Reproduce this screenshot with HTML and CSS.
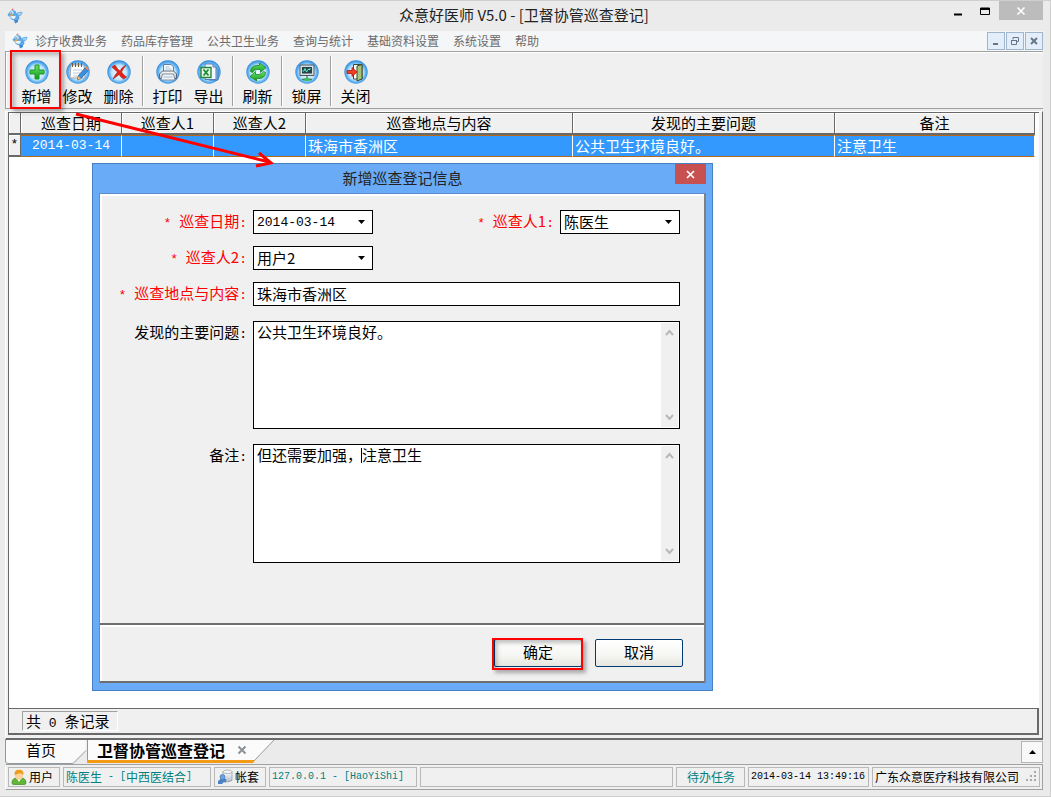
FILE: index.html
```html
<!DOCTYPE html>
<html lang="zh-CN">
<head>
<meta charset="utf-8">
<title>众意好医师 V5.0 - [卫督协管巡查登记]</title>
<meta name="viewport" content="width=device-width, initial-scale=1">
<link rel="stylesheet" href="styles.css">
</head>
<body>
<svg class="defs" aria-hidden="true">
  <defs>
    <radialGradient id="ball" cx="50%" cy="52%" r="52%">
      <stop offset="0" stop-color="#eefaff"/><stop offset=".6" stop-color="#c3e6fc"/><stop offset=".8" stop-color="#62b3f1"/><stop offset="1" stop-color="#2f86da"/>
    </radialGradient>
    <linearGradient id="green" x1="0" y1="0" x2="0" y2="1"><stop offset="0" stop-color="#6fe06a"/><stop offset="1" stop-color="#0f9a1c"/></linearGradient>
    <linearGradient id="metal" x1="0" y1="0" x2="0" y2="1"><stop offset="0" stop-color="#ffffff"/><stop offset="1" stop-color="#b4bcc8"/></linearGradient>
    <symbol id="logo" viewBox="0 0 16 16">
      <path d="M2 5Q3 2.200 6 2.200T9.500 5.500Q12 3 15.500 4 15 7.500 12 8.500 13 10 12 11.500 10.500 13 8 12.500L5.500 12Q3 11 3 9 .8 8 .5 6.500z" fill="#5da7e6"/>
      <path d="M10.500 5.500Q13 4 15 4.500 14.500 7 11.500 7.500z" fill="#9fd0f5"/>
      <path d="M3 7.500Q6 8.500 8.500 7.500 9 10.500 6.500 11 3.500 10.500 3 7.500z" fill="#eef5fa"/>
      <circle cx="5" cy="4.800" r="1.700" fill="#d9edfb"/><circle cx="4.800" cy="5" r=".6" fill="#234"/>
      <path d="M1.500 7l5-.5-2 2z" fill="#f0a23a"/>
      <path d="M7 12l1 3.500L11 14v-2z" fill="#3f8bd2"/>
      <path d="M4 1.500l2-1 .5 1.500z" fill="#d8504a"/>
    </symbol>
  </defs>
</svg>

<div class="window">
  <header class="titlebar">
    <svg class="logo"><use href="#logo"/></svg>
    <h1>众意好医师 V5.0 - [卫督协管巡查登记]</h1>
    <div class="window-controls">
      <button aria-label="最小化"><svg width="10" height="14"><path d="M1 11.500h8" stroke="#000" stroke-width="2"/></svg></button>
      <button aria-label="最大化"><svg width="12" height="14"><path d="M1.500 5v6.500h9V5z" fill="none" stroke="#000"/><path d="M1 6h10" stroke="#000" stroke-width="2"/></svg></button>
      <button class="window-close" aria-label="关闭窗口"><svg width="10" height="10"><path d="M1.500 1.500l7 7m0-7l-7 7" stroke="#fff" stroke-width="1.600"/></svg></button>
    </div>
  </header>

  <nav class="menubar">
    <svg class="logo"><use href="#logo"/></svg>
    <button>诊疗收费业务</button>
    <button>药品库存管理</button>
    <button>公共卫生业务</button>
    <button>查询与统计</button>
    <button>基础资料设置</button>
    <button>系统设置</button>
    <button>帮助</button>
    <div class="mdi">
      <button aria-label="最小化子窗口"><svg width="10" height="10"><path d="M2 8h5" stroke="#667789" stroke-width="2"/></svg></button>
      <button aria-label="还原子窗口"><svg width="10" height="10"><path d="M3 3.500V1.500h5.500v4H7M1.500 4.500h5v4h-5z" fill="none" stroke="#667789"/><path d="M1 4.500h6" stroke="#667789"/></svg></button>
      <button aria-label="关闭子窗口"><svg width="10" height="10"><path d="M2 2l6 6m0-6l-6 6" stroke="#667789" stroke-width="2"/></svg></button>
    </div>
  </nav>

  <div class="toolbar" role="toolbar" aria-label="工具栏">
    <span class="sep"></span>
    <button class="tool marked">
      <svg viewBox="0 0 24 24"><circle cx="12" cy="12" r="11.700" fill="url(#ball)"/><path d="M10 5h4v5h5v4h-5v5h-4v-5H5v-4h5z" fill="url(#green)" stroke="#1b9a26"/></svg>新增</button>
    <button class="tool">
      <svg viewBox="0 0 24 24"><circle cx="12" cy="12" r="11.700" fill="url(#ball)"/><path d="M5 5h13l1 13H4z" fill="#fff" stroke="#9aa5b2"/><path d="M6.500 3v4M9.500 3v4M12.500 3v4M15.500 3v4" stroke="#7b5a2a"/><path d="M7 10h9M7 13h7M7 16h4" stroke="#b9c8da"/><path d="M19 8l3 2.500-7 8-3.500 1.500.5-4z" fill="#3f8fe0" stroke="#1f5ea8" stroke-width=".8"/><path d="M12 16l3 2.500-3.500 1.500z" fill="#f4b95f"/><path d="M19 8l3 2.500 1-1.500-2.500-2.500z" fill="#ee8b4a"/></svg>修改</button>
    <button class="tool">
      <svg viewBox="0 0 24 24"><circle cx="12" cy="12" r="11.700" fill="url(#ball)"/><path d="M5 7l3-2q2 4 5 6 2-4 6-6-3 4-4.500 7 2 3 5 5l-3 2q-3-2-4.500-4.500Q9 17 6 19q2-4 4.500-7Q8 10 5 7z" fill="#e02418" stroke="#b8160f" stroke-width=".6"/></svg>删除</button>
    <span class="sep"></span>
    <button class="tool">
      <svg viewBox="0 0 24 24"><circle cx="12" cy="12" r="11.700" fill="url(#ball)"/><path d="M7.500 12V4.500h7.500L17.500 7v5z" fill="#f7fbff" stroke="#5f7fa5"/><path d="M9.500 7h4M9.500 9h6" stroke="#a9c3de"/><path d="M6.500 11h11l3 3v4.500h-17V14z" fill="url(#metal)" stroke="#5b6674"/><path d="M6.500 14h11l1.500 6H5z" fill="#eef4fb" stroke="#6d7a89" stroke-width=".8"/><path d="M7.500 17h9" stroke="#a9b8c9"/></svg>打印</button>
    <button class="tool">
      <svg viewBox="0 0 24 24"><circle cx="12" cy="12" r="11.700" fill="url(#ball)"/><path d="M12 6.500h6l3 3V20h-9z" fill="#8cc0f5" stroke="#376fb4"/><path d="M8 4h8l3 3v12.500H8z" fill="#f5faff" stroke="#4f7fbc"/><path d="M16 4v3h3" fill="#a9cdf2" stroke="#4f7fbc"/><path d="M4 7.500h10v10H4z" fill="#e6f6e3" stroke="#25833a" stroke-width="1.400"/><path d="M6.500 9.500l5 6m0-6l-5 6" stroke="#1b8b34" stroke-width="1.800"/></svg>导出</button>
    <span class="sep"></span>
    <button class="tool">
      <svg viewBox="0 0 24 24"><circle cx="12" cy="12" r="11.700" fill="url(#ball)"/><path d="M4.500 11.500Q5 5.500 11 5.500h2.500V3L20 7.500l-5.500 5V9.500h-3q-4 0-5 3z" fill="url(#green)" stroke="#16882a" stroke-width=".8"/><path d="M19.500 12.500q-.5 6-6.500 6h-2.500V21L4 16.500l5.500-5v3h3q4 0 5-3z" fill="url(#green)" stroke="#16882a" stroke-width=".8"/></svg>刷新</button>
    <span class="sep"></span>
    <button class="tool">
      <svg viewBox="0 0 24 24"><circle cx="12" cy="12" r="11.700" fill="url(#ball)"/><path d="M5 5h14v10.500H5z" fill="#d6dde3" stroke="#4f5a63"/><path d="M7 7h10v6.500H7z" fill="#26414a"/><path d="M7.500 11H9l1-2.500 1.500 3.500 1.500-2.500h2V8" fill="none" stroke="#5ff0c8"/><path d="M12 16v3M7 19.500h10" stroke="#4b7a63" stroke-width="1.400"/><path d="M9.500 18h5v3h-5z" fill="#3cc25b"/></svg>锁屏</button>
    <span class="sep"></span>
    <button class="tool">
      <svg viewBox="0 0 24 24"><circle cx="12" cy="12" r="11.700" fill="url(#ball)"/><path d="M9.500 4.500h8.500v14.500H9.500z" fill="#fff" stroke="#3d4a3d"/><path d="M13 6l5-1.500V19l-5 2z" fill="#a9c37b" stroke="#3a4b2a"/><path d="M3 10.500h5V7.500l5 4.500-5 4.500v-3H3z" fill="#f0402a" stroke="#b31a0c" stroke-width=".8"/></svg>关闭</button>
  </div>

  <main class="panel">
    <div class="grid-area">
      <table class="records">
        <colgroup><col class="c-mark"><col class="c-date"><col class="c-person"><col class="c-person"><col class="c-place"><col class="c-issue"><col></colgroup>
        <thead>
          <tr><th></th><th>巡查日期</th><th>巡查人1</th><th>巡查人2</th><th>巡查地点与内容</th><th>发现的主要问题</th><th>备注</th></tr>
        </thead>
        <tbody>
          <tr><th class="latin" scope="row">*</th><td class="latin date">2014-03-14</td><td></td><td></td><td>珠海市香洲区</td><td>公共卫生环境良好。</td><td>注意卫生</td></tr>
        </tbody>
      </table>
    </div>
    <div class="summary"><span class="count">共<span class="latin"> 0 </span>条记录</span></div>
  </main>

  <div class="tabs">
    <button class="tab home"><svg viewBox="0 0 82 24" aria-hidden="true"><path d="M.5 0v21q0 2.500 2.500 2.500h65l13-13V0z" fill="#fafafa"/><path d="M.5 0v21q0 2.500 2.500 2.500h65l13-13" fill="none" stroke="#8f9aa0"/></svg><span>首页</span></button>
    <div class="tab active"><svg viewBox="0 0 187 24" aria-hidden="true"><path d="M.5 0v22h166L187 0z" fill="#fbfbfb"/><path d="M.5 0v21M187 0l-21 22" fill="none" stroke="#8f9aa0"/><path d="M0 20h168l-2 3H0z" fill="#f59a14"/></svg><span>卫督协管巡查登记</span><button class="tab-close" aria-label="关闭标签"><svg width="10" height="10"><path d="M1.500 1.500l7 7m0-7l-7 7" stroke="#8a9297" stroke-width="2"/></svg></button></div>
    <button class="scroll-up" aria-label="展开"><svg width="7" height="4"><path d="M0 4l3.500-4L7 4z"/></svg></button>
  </div>

  <footer class="statusbar">
    <span class="cell s-icon"><svg width="16" height="16"><path d="M1 14q0-5 5-5h4q5 0 5 5 0 1.500-2 1.500H3Q1 15.500 1 14z" fill="#63b53a" stroke="#3d8a20" stroke-width=".7"/><ellipse cx="8" cy="6.500" rx="4" ry="4.500" fill="#fbd29c"/><path d="M3.500 6Q3 .8 8 .8T12.500 6Q10 3.500 7.500 4.500T3.500 6z" fill="#ef9c1c"/><path d="M6.500 10.500L8 13l1.500-2.500" fill="#fff"/></svg>用户</span>
    <span class="cell s-text teal">陈医生<span class="latin"> - [</span>中西医结合<span class="latin">]</span></span>
    <span class="cell s-icon"><svg width="16" height="16"><path d="M6 2.500v9q4 3 9 0v-9z" fill="url(#metal)" stroke="#8a929b" stroke-width=".7"/><ellipse cx="10.500" cy="2.800" rx="4.500" ry="1.800" fill="#f3f5f7" stroke="#9aa1a8" stroke-width=".7"/><circle cx="5.500" cy="8" r="2.500" fill="#6fa3dc" stroke="#4478b8" stroke-width=".7"/><path d="M3.500 10L1 12v3h4l2-2 1.500 1 1-4z" fill="#4a82c8"/></svg>帐套</span>
    <span class="cell s-text teal latin">127.0.0.1 - [HaoYiShi]</span>
    <span class="cell s-fill"></span>
    <a class="cell s-task teal" href="#tasks">待办任务</a>
    <time class="cell s-time latin" datetime="2014-03-14T13:49:16">2014-03-14 13:49:16</time>
    <span class="cell s-company">广东众意医疗科技有限公司<svg width="12" height="12"><path d="M9 1h2M9 5h2M9 9h2M5 5h2M5 9h2M1 9h2" stroke="#aaa" stroke-width="2"/></svg></span>
  </footer>

  <section class="dialog" role="dialog" aria-labelledby="dialog-title">
    <header class="dialog-title">
      <h2 id="dialog-title">新增巡查登记信息</h2>
      <button aria-label="关闭对话框"><svg width="9" height="9"><path d="M1 1l7 7m0-7l-7 7" stroke="#fff" stroke-width="1.700"/></svg></button>
    </header>
    <form class="dialog-body">
      <div class="fields">
        <div class="field-rows">
          <div class="row">
            <label class="required" for="date"><span class="latin">* </span>巡查日期<span class="latin">:</span></label>
            <div class="combo"><input class="latin" id="date" type="text" value="2014-03-14"><svg width="7" height="4"><path d="M0 0h7L3.500 4z"/></svg></div>
            <label class="required second" for="person1"><span class="latin">* </span>巡查人1<span class="latin">:</span></label>
            <div class="combo"><select id="person1"><option>陈医生</option></select><svg width="7" height="4"><path d="M0 0h7L3.500 4z"/></svg></div>
          </div>
          <div class="row">
            <label class="required" for="person2"><span class="latin">* </span>巡查人2<span class="latin">:</span></label>
            <div class="combo"><select id="person2"><option>用户2</option></select><svg width="7" height="4"><path d="M0 0h7L3.500 4z"/></svg></div>
          </div>
          <div class="row">
            <label class="required" for="place"><span class="latin">* </span>巡查地点与内容<span class="latin">:</span></label>
            <input class="line" id="place" type="text" value="珠海市香洲区">
          </div>
        </div>
        <div class="row">
          <label for="issue">发现的主要问题<span class="latin">:</span></label>
          <div class="memo issue"><textarea id="issue">公共卫生环境良好。</textarea><div class="scroll"><svg width="9" height="7"><path d="M1 6l3.500-4L8 6" /></svg><svg width="9" height="7"><path d="M1 1l3.500 4L8 1"/></svg></div></div>
        </div>
        <div class="row">
          <label for="note">备注<span class="latin">:</span></label>
          <div class="memo note"><textarea id="note">但还需要加强，注意卫生</textarea><div class="scroll"><svg width="9" height="7"><path d="M1 6l3.500-4L8 6"/></svg><svg width="9" height="7"><path d="M1 1l3.500 4L8 1"/></svg></div><i class="caret"></i></div>
        </div>
      </div>
      <div class="actions">
        <button class="marked" type="button">确定</button>
        <button type="button">取消</button>
      </div>
    </form>
  </section>

  <svg class="pointer" width="210" height="64" aria-hidden="true"><path d="M5 5L198 53" stroke="#f00" stroke-width="3"/><path d="M188 44l12 10-15 3" fill="none" stroke="#f00" stroke-width="3"/></svg>
</div>
</body>
</html>
```

FILE: styles.css
```css
* { box-sizing: border-box; }
body {
  margin: 0;
  font: 15px/20px "Noto Sans CJK SC", sans-serif;
  color: #000;
  background: #ebebeb;
}
button, input, select, textarea { font: inherit; color: inherit; margin: 0; }
button { background: none; border: 0; padding: 0; }
h1, h2 { margin: 0; font-size: 15px; font-weight: 400; }
svg { display: block; flex: none; }
.defs { position: absolute; width: 0; height: 0; }
.latin { font-family: "Liberation Mono", "Noto Sans CJK SC", monospace; font-size: 13px; white-space: pre; }
.logo { width: 16px; height: 16px; }

.window {
  position: relative;
  display: flex;
  flex-direction: column;
  min-height: 100vh;
  padding: 0 7px 6px 5px;
  border: 1px solid #cfcfcf;
  border-left: 0;
}

.titlebar { display: grid; grid-template-columns: 1fr auto 1fr; height: 30px; }
.titlebar .logo { margin: 7px 2px; }
.titlebar h1 { line-height: 28px; color: #222; }
.window-controls { display: flex; justify-content: flex-end; align-items: flex-start; gap: 16px; }
.window-controls button { padding-top: 2px; }
.window-controls .window-close { display: grid; place-items: center; width: 44px; height: 19px; padding: 0; margin-left: -8px; background: #bcbcbc; }

.menubar { display: flex; align-items: center; gap: 14px; height: 20px; padding-left: 7px; background: #f5f6f7; font-size: 12px; color: #6b6b6b; }
.menubar .logo { margin-right: -7px; }
.mdi { display: flex; gap: 1px; margin-left: auto; }
.mdi button { display: grid; place-items: center; width: 18px; height: 18px; border: 1px solid #9fb6cd; background: #e3eefa; }

.toolbar { display: flex; height: 58px; padding: 8px 2px 0; border: 1px solid #a0a0a0; border-width: 1px 0 1px 1px; box-shadow: inset 1px 1px #fff; background: #f0f0f0; }
.sep { width: 8px; height: 50px; margin-top: -4px; background: linear-gradient(90deg, transparent 3px, #a0a0a0 3px, #a0a0a0 4px, #fff 4px, #fff 5px, transparent 5px); }
.tool { display: flex; flex-direction: column; align-items: center; gap: 2px; width: 41px; height: 46px; }
.tool svg { width: 24px; height: 24px; }
.marked { position: relative; }
.marked::after { content: ""; position: absolute; border: 2px solid #f00; box-shadow: 3px 3px 4px rgba(0,0,0,.3), inset 3px 3px 4px rgba(0,0,0,.25); pointer-events: none; }
.tool.marked::after { inset: -10px -4px -3px -6px; }

.panel { flex: 1; display: flex; flex-direction: column; margin-top: 2px; padding: 0 3px 3px 2px; border: 1px solid #fff; border-right: 1px solid #6b6b6b; border-bottom: 2px solid #6b6b6b; background: #f0f0f0; }
.grid-area { flex: 1; border: 1px solid #696969; border-right: 0; border-bottom: 0; padding-right: 4px; background: #fff; }
.records { width: 100%; table-layout: fixed; border-collapse: separate; border-spacing: 0; }
.c-mark { width: 12px; }
.c-date { width: 101px; }
.c-person { width: 92px; }
.c-place { width: 267px; }
.c-issue { width: 262px; }
.records th { height: 22px; padding: 0; font-weight: 400; line-height: 20px; background: #f0f0f0; border-right: 1px solid #696969; border-bottom: 2px solid #696969; box-shadow: inset 1px 1px #fff; }
.records td { height: 22px; padding: 0 0 0 2px; line-height: 18px; color: #fff; background: #3399ff; border-right: 1px solid #fff; border-top: 1px solid #b5671a; border-bottom: 1px solid #b5671a; }
.records tbody th { line-height: 18px; }
.records .date { padding: 0; text-align: center; }
.summary { display: flex; padding: 2px 13px; height: 27px; border: 1px solid #696969; border-width: 1px 2px 2px 1px; }
.count { padding: 0 8px 0 3px; line-height: 18px; height: 20px; border: 1px solid #fff; border-top-color: #a0a0a0; border-left-color: #a0a0a0; }

.tabs { display: flex; height: 24px; }
.tab { position: relative; display: flex; align-items: center; height: 24px; }
.tab > svg { position: absolute; inset: 0; width: 100%; height: 100%; }
.tab > span { position: relative; line-height: 20px; }
.home { width: 82px; padding: 0 0 4px 21px; }
.active { width: 187px; padding: 0 0 4px 10px; gap: 12px; font-weight: 700; font-size: 16px; }
.tab-close { position: relative; }
.scroll-up { display: grid; place-items: center; width: 22px; height: 22px; margin: 1px 0 0 auto; border: 1px solid #b5b5b5; background: #f8f8f8; }

.statusbar { display: flex; gap: 3px; height: 26px; padding: 2px; border: 1px solid #a0a0a0; border-left-color: #fff; font-size: 12px; background: #f0f0f0; }
.statusbar .latin { font-size: 10px; }
.cell { display: flex; align-items: center; height: 20px; padding: 0 2px; border: 1px solid #b8b8b8; color: #000; text-decoration: none; white-space: pre; }
.cell.teal { color: #008080; }
.s-icon { width: 52px; gap: 2px; }
.s-text { width: 148px; }
.s-fill { flex: 1; }
.s-task { width: 69px; padding-left: 10px; }
.s-time { width: 121px; }
.s-company { width: 168px; justify-content: space-between; }

.dialog { position: absolute; left: 92px; top: 162px; width: 621px; padding: 0 6px 7px; border: 1px solid #4481c4; background: #6aabf7; }
.dialog-title { display: grid; grid-template-columns: 1fr auto 1fr; height: 29px; }
.dialog-title h2 { grid-column: 2; line-height: 28px; color: #222; }
.dialog-title button { justify-self: end; display: grid; place-items: center; width: 31px; height: 20px; background: #c75050; }
.dialog-body { border: 1px solid #5b8fcf; border-right: 2px solid #808080; border-bottom: 0; background: #f0f0f0; }
.fields { display: flex; flex-direction: column; gap: 15px; height: 431px; padding: 16px 24px 0 0; border-bottom: 2px solid #6e6e6e; box-shadow: inset 2px 2px #fff; }
.field-rows { display: flex; flex-direction: column; gap: 12px; }
.row { display: flex; gap: 6px; }
.row label { width: 147px; height: 24px; line-height: 22px; text-align: right; white-space: nowrap; }
.row .required { color: #f00; }
.row .second { flex: 1; }
.combo { position: relative; display: flex; align-items: center; width: 120px; height: 24px; border: 1px solid #000; background: #fff; }
.combo input, .combo select { width: 100%; height: 22px; padding: 0 16px 0 3px; border: 0; outline: 0; appearance: none; background: none; line-height: 20px; }
.combo svg { position: absolute; right: 7px; top: 9px; pointer-events: none; }
.line { flex: 1; min-width: 0; height: 24px; padding: 0 3px 2px; border: 1px solid #000; background: #fff; outline: 0; }
.memo { position: relative; flex: 1; display: flex; padding: 1px; border: 1px solid #000; background: #fff; }
.issue { height: 108px; }
.note { height: 119px; }
.memo textarea { flex: 1; padding: 0 2px; border: 0; outline: 0; resize: none; overflow: hidden; line-height: 18px; background: none; }
.scroll { display: flex; flex-direction: column; justify-content: space-between; align-items: center; width: 17px; padding: 6px 0; background: #f0f0f0; }
.scroll path { fill: none; stroke: #b8b8b8; stroke-width: 2; }
.caret { position: absolute; left: 107px; top: 3px; width: 1px; height: 15px; background: #000; }
.actions { display: flex; justify-content: flex-end; gap: 13px; height: 58px; padding: 14px 21px 0 0; border-bottom: 2px solid #6e6e6e; box-shadow: inset 2px 2px #fff; }
.actions button { width: 88px; height: 28px; padding-bottom: 2px; border: 1px solid #003c74; border-radius: 2px; background: linear-gradient(#fff, #f6f6f3 60%, #e6e5de); line-height: 24px; }
.actions .marked::after { inset: -2px -2px -4px -3px; }

.pointer { position: absolute; left: 71px; top: 108px; }
```
